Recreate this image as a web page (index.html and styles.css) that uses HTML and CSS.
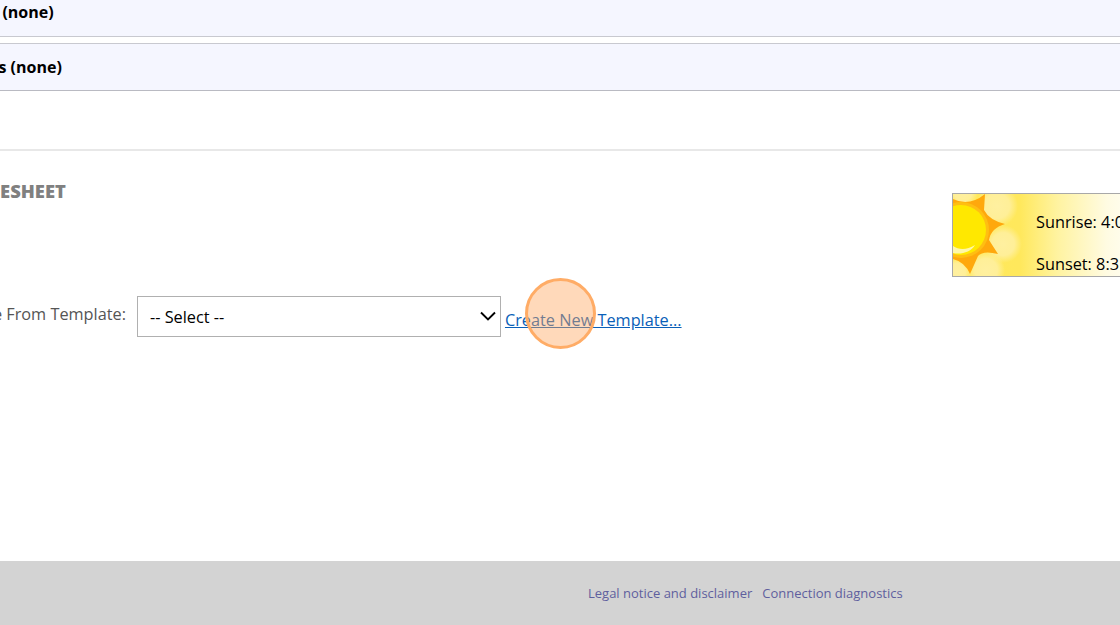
FILE: index.html
```html
<!DOCTYPE html>
<html lang="en">
<head>
<meta charset="utf-8">
<title>Timesheet</title>
<link rel="stylesheet" href="styles.css">
</head>
<body>
<div class="page">
  <section class="bar bar-first"><span class="bar-text first-text">Notes (none)</span></section>
  <section class="bar bar-second"><span class="bar-text second-text">Attachments (none)</span></section>
  <div class="spacer"></div>
  <main class="content">
    <div class="left">
      <h2 class="title">TIMESHEET</h2>
      <div class="form-row">
        <label class="form-label" for="tpl">Create From Template:</label>
        <div class="select-wrap">
          <select id="tpl" class="select"><option>-- Select --</option></select>
          <svg class="chevron" viewBox="0 0 16 10" width="16" height="10" aria-hidden="true"><path d="M1 1.5 L8 8.5 L15 1.5" fill="none" stroke="#000" stroke-width="1.9"/></svg>
        </div>
        <div class="link-wrap">
          <a class="link" href="#">Create New Template...</a>
          <span class="click-mark"></span>
        </div>
      </div>
    </div>
    <aside class="sun">
      <svg class="sun-art" viewBox="0 0 70 82" width="70" height="82" aria-hidden="true">
        <defs>
          <radialGradient id="pale">
            <stop offset="0" stop-color="#fff0a0"/>
            <stop offset="0.6" stop-color="#ffef98"/>
            <stop offset="1" stop-color="#ffef98" stop-opacity="0"/>
          </radialGradient>
        </defs>
        <circle cx="10" cy="-2" r="15" fill="url(#pale)"/>
        <circle cx="44" cy="12" r="21" fill="url(#pale)"/>
        <circle cx="50" cy="50" r="19" fill="url(#pale)"/>
        <circle cx="33" cy="76" r="19" fill="url(#pale)"/>
        <circle cx="4" cy="78" r="14" fill="url(#pale)"/>
        <path d="M0 5 Q16 13 32 0 L31 16 Q36 26 52 30 Q38 34 36 46 L45 60 Q30 56 25 62 L17 80 Q12 68 0 65 Z" fill="#ffa80c"/>
        <circle cx="8" cy="36" r="28" fill="#ffbe12"/>
        <circle cx="8" cy="36" r="25" fill="#ffe800"/>
        <path d="M0 52 C6 56 14 56 22 51 C18 58 8 61 0 59 Z" fill="#fff7a8"/>
      </svg>
      <div class="sun-times">
        <span>Sunrise: 4:05 AM</span>
        <span>Sunset: 8:31 PM</span>
      </div>
    </aside>
  </main>
  <footer class="footer">
    <a class="foot-link" href="#">Legal notice and disclaimer</a>
    <a class="foot-link" href="#">Connection diagnostics</a>
  </footer>
</div>
</body>
</html>
```

FILE: styles.css
```css
* { box-sizing: border-box; }
html, body { margin: 0; padding: 0; background: #fff; }
body { font-family: "Open Sans", "Liberation Sans", sans-serif; font-size: 16px; color: #000; }
.page { width: 1120px; height: 625px; overflow: hidden; display: flex; flex-direction: column; }
.bar { background: #f5f6ff; display: flex; align-items: center; flex: none; white-space: nowrap; }
.bar-first { height: 37px; border-bottom: 1px solid #c8c9d0; padding-bottom: 12px; }
.bar-second { height: 48px; margin-top: 6px; border-top: 1px solid #c8c9d0; border-bottom: 1px solid #b9bac2; }
.bar-text { font-weight: 700; font-size: 16px; line-height: 22px; }
.first-text { margin-left: -49px; }
.second-text { margin-left: -97.5px; }
.spacer { height: 60px; border-bottom: 2px solid #e8e8e8; flex: none; }
.content { flex: 1; display: flex; justify-content: space-between; align-items: flex-start; padding-top: 28px; }
.left { flex: none; white-space: nowrap; }
.title { margin: 0 0 0 -35px; font-size: 18.4px; line-height: 24px; font-weight: 800; color: #808080; }
.form-row { display: flex; align-items: flex-start; margin-top: 93px; margin-left: -48px; }
.form-label { color: #555; font-size: 16.3px; line-height: 22px; margin-top: 7px; margin-right: 11px; }
.select-wrap { position: relative; width: 364px; height: 41px; }
.select { appearance: none; -webkit-appearance: none; width: 100%; height: 100%; background: #fff; border: 1px solid #b0b0b0; border-radius: 0; font: 16.3px "Open Sans", sans-serif; color: #000; padding: 0 12px; }
.chevron { position: absolute; right: 5px; top: 15px; }
.link-wrap { position: relative; margin-left: 4px; margin-top: 13px; }
.link { color: #0a5fb8; font-size: 16.3px; line-height: 22px; }
.click-mark { position: absolute; left: 20px; top: -31px; width: 71px; height: 71px; border-radius: 50%; background: rgba(255, 165, 90, 0.42); border: 3px solid #ffac66; }
.sun { flex: none; width: 250px; height: 84px; margin-right: -82px; margin-top: 14px; position: relative; display: flex; overflow: hidden; border: 1px solid #a8a8a8; background: linear-gradient(90deg, #ffe95a 0%, #ffe85c 27%, #fff3a0 42%, #fffbe2 62%, #ffffff 80%); }
.sun-art { flex: none; }
.sun-times { display: flex; flex-direction: column; justify-content: space-between; margin-left: 13px; padding: 17px 0 1px; font-size: 16.3px; line-height: 22px; white-space: nowrap; }
.footer { flex: none; height: 64px; background: #d3d3d3; display: flex; align-items: center; gap: 10px; padding-left: 588px; font-size: 13px; }
.foot-link { color: #5f5f9e; text-decoration: none; }
```
